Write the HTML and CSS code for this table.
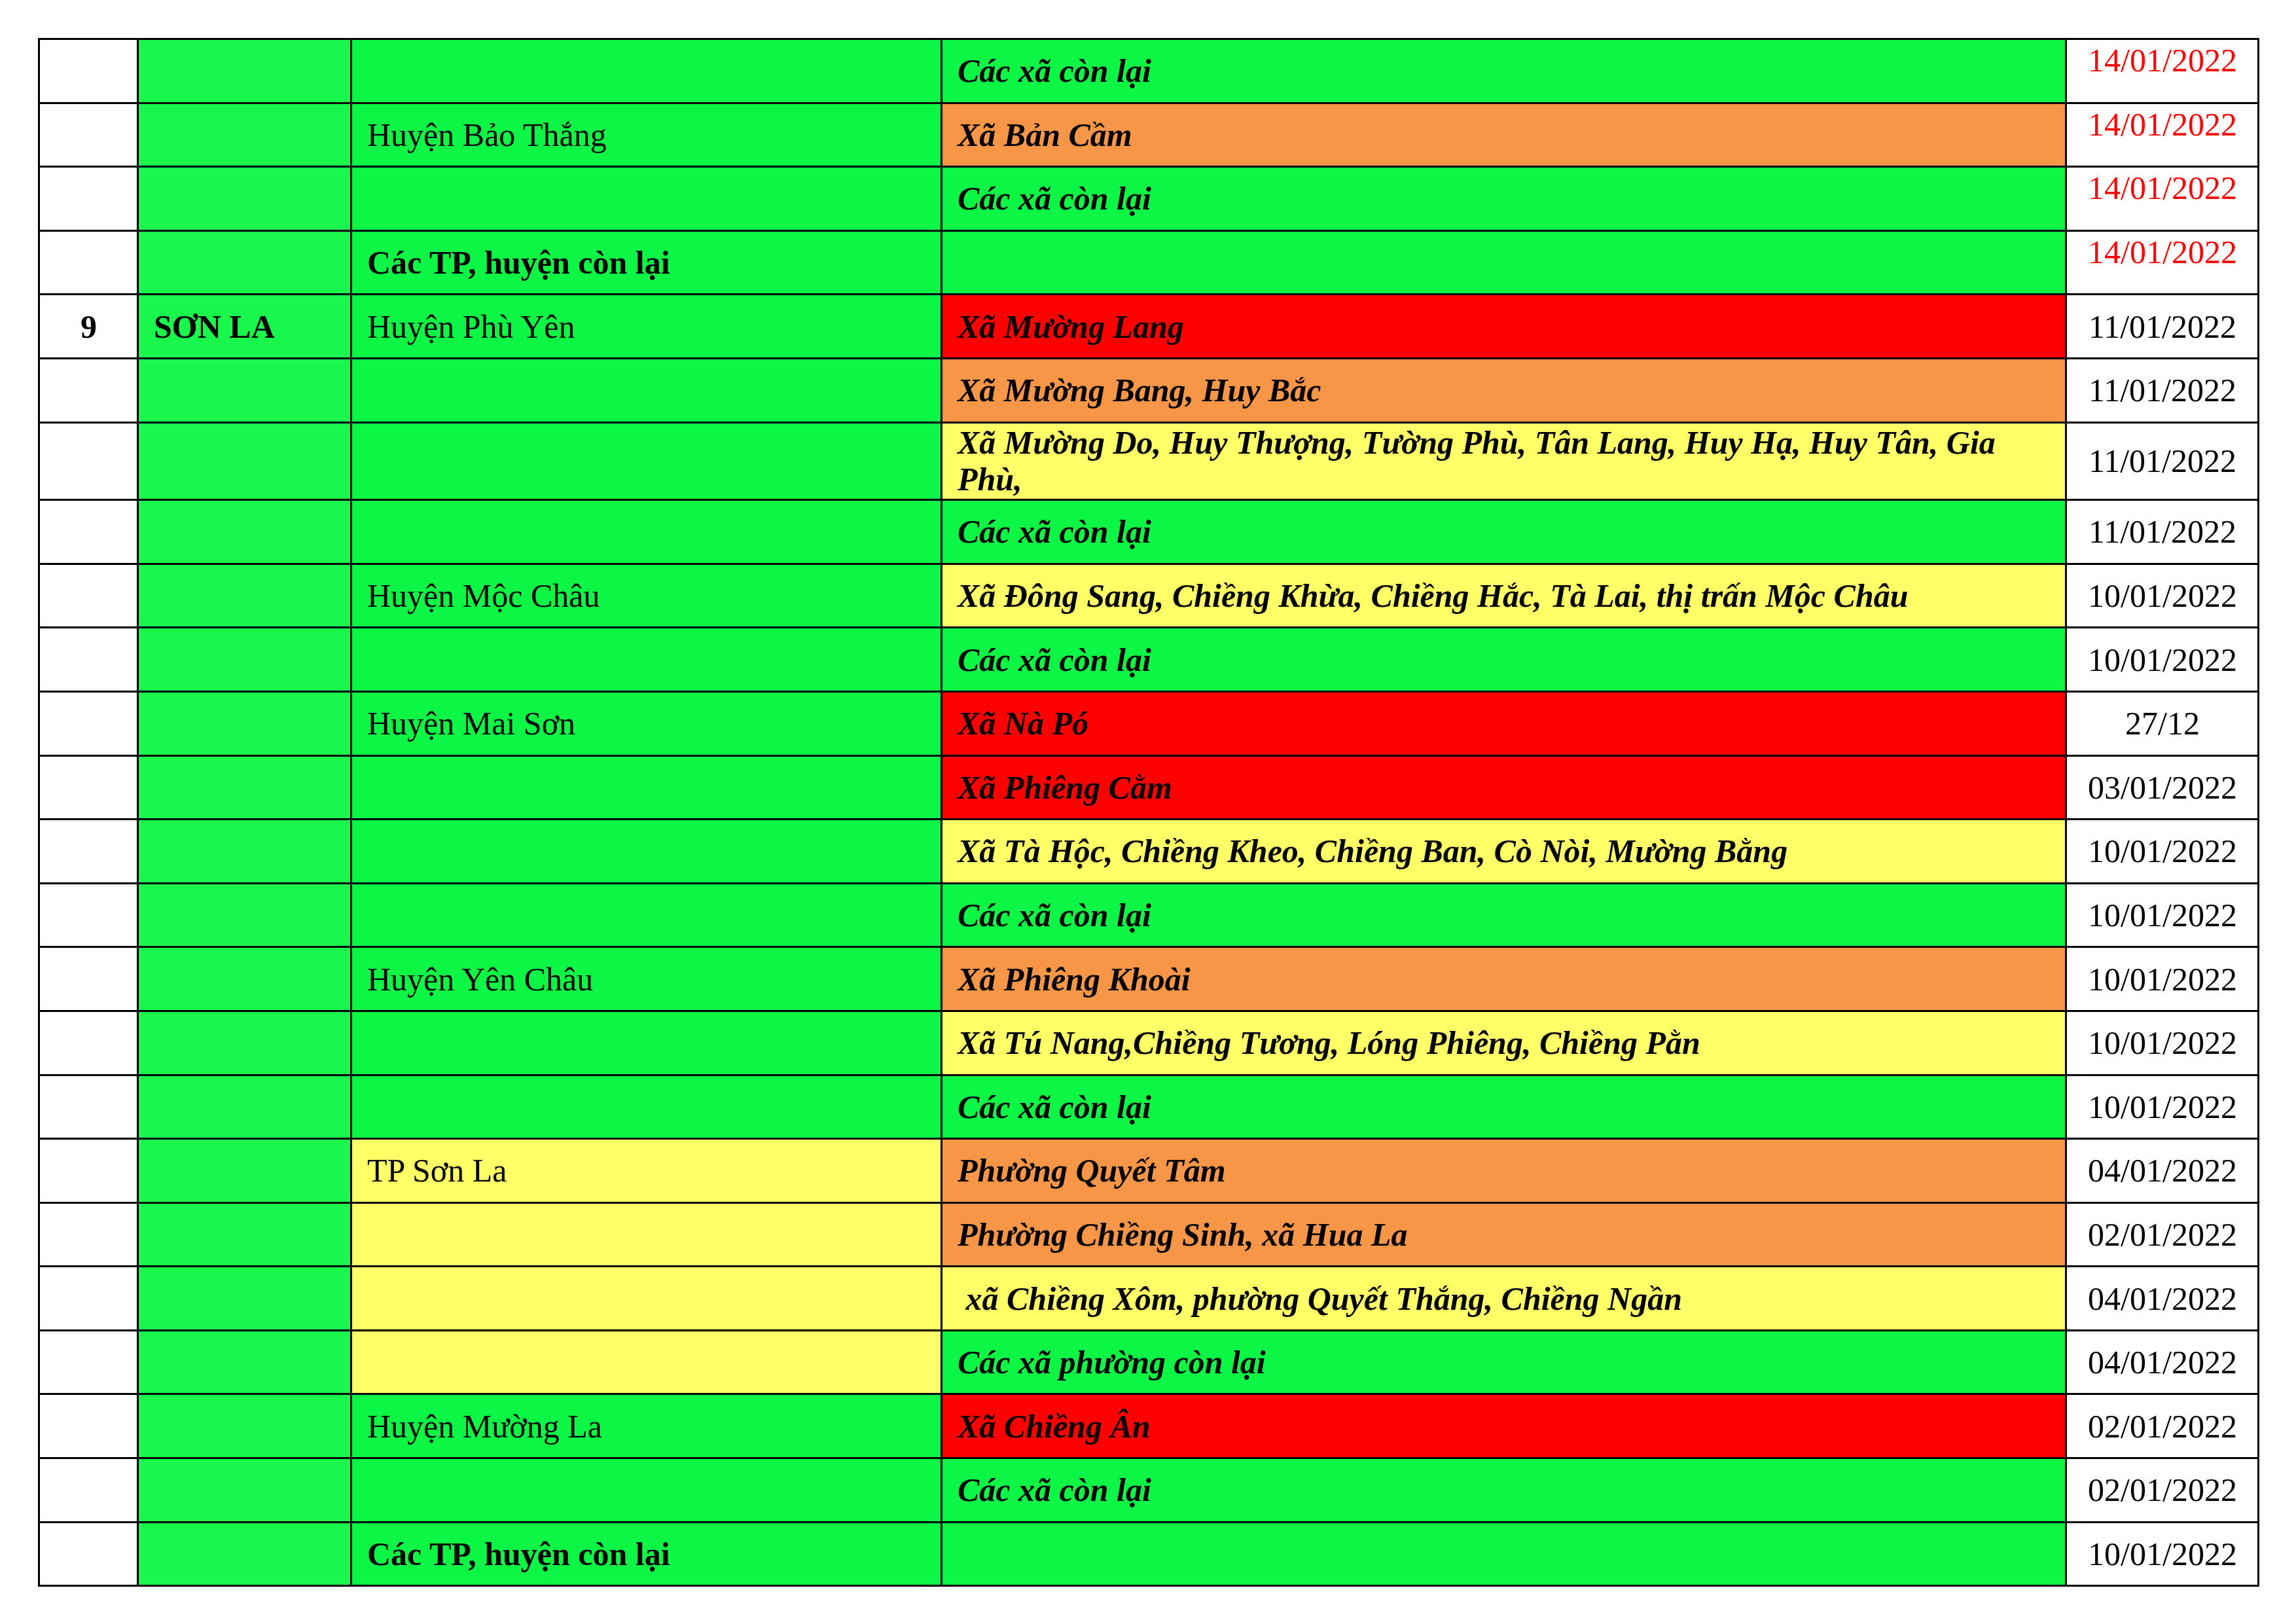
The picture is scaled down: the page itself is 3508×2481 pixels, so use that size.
FILE: index.html
```html
<!DOCTYPE html>
<html lang="vi">
<head>
<meta charset="utf-8">
<title>Cấp độ dịch</title>
<link rel="stylesheet" href="styles.css">
</head>
<body>
<table class="sheet">
  <colgroup>
    <col class="w-num"><col class="w-prov"><col class="w-dist"><col class="w-comm"><col class="w-date">
  </colgroup>
  <tbody>
    <tr><td class="num"></td><td class="prov"></td><td class="dist g"></td><td class="comm g">Các xã còn lại</td><td class="date late">14/01/2022</td></tr>
    <tr><td class="num"></td><td class="prov"></td><td class="dist g">Huyện Bảo Thắng</td><td class="comm o">Xã Bản Cầm</td><td class="date late">14/01/2022</td></tr>
    <tr><td class="num"></td><td class="prov"></td><td class="dist g"></td><td class="comm g">Các xã còn lại</td><td class="date late">14/01/2022</td></tr>
    <tr><td class="num"></td><td class="prov"></td><td class="dist g strong">Các TP, huyện còn lại</td><td class="comm g"></td><td class="date late">14/01/2022</td></tr>
    <tr><td class="num strong">9</td><td class="prov strong">SƠN LA</td><td class="dist g">Huyện Phù Yên</td><td class="comm r">Xã Mường Lang</td><td class="date">11/01/2022</td></tr>
    <tr><td class="num"></td><td class="prov"></td><td class="dist g"></td><td class="comm o">Xã Mường Bang, Huy Bắc</td><td class="date">11/01/2022</td></tr>
    <tr class="tall"><td class="num"></td><td class="prov"></td><td class="dist g"></td><td class="comm y">Xã Mường Do, Huy Thượng, Tường Phù, Tân Lang, Huy Hạ, Huy Tân, Gia Phù,</td><td class="date">11/01/2022</td></tr>
    <tr><td class="num"></td><td class="prov"></td><td class="dist g"></td><td class="comm g">Các xã còn lại</td><td class="date">11/01/2022</td></tr>
    <tr><td class="num"></td><td class="prov"></td><td class="dist g">Huyện Mộc Châu</td><td class="comm y">Xã Đông Sang, Chiềng Khừa, Chiềng Hắc, Tà Lai, thị trấn Mộc Châu</td><td class="date">10/01/2022</td></tr>
    <tr><td class="num"></td><td class="prov"></td><td class="dist g"></td><td class="comm g">Các xã còn lại</td><td class="date">10/01/2022</td></tr>
    <tr><td class="num"></td><td class="prov"></td><td class="dist g">Huyện Mai Sơn</td><td class="comm r">Xã Nà Pó</td><td class="date">27/12</td></tr>
    <tr><td class="num"></td><td class="prov"></td><td class="dist g"></td><td class="comm r">Xã Phiêng Cằm</td><td class="date">03/01/2022</td></tr>
    <tr><td class="num"></td><td class="prov"></td><td class="dist g"></td><td class="comm y">Xã Tà Hộc, Chiềng Kheo, Chiềng Ban, Cò Nòi, Mường Bằng</td><td class="date">10/01/2022</td></tr>
    <tr><td class="num"></td><td class="prov"></td><td class="dist g"></td><td class="comm g">Các xã còn lại</td><td class="date">10/01/2022</td></tr>
    <tr><td class="num"></td><td class="prov"></td><td class="dist g">Huyện Yên Châu</td><td class="comm o">Xã Phiêng Khoài</td><td class="date">10/01/2022</td></tr>
    <tr><td class="num"></td><td class="prov"></td><td class="dist g"></td><td class="comm y">Xã Tú Nang,Chiềng Tương, Lóng Phiêng, Chiềng Pằn</td><td class="date">10/01/2022</td></tr>
    <tr><td class="num"></td><td class="prov"></td><td class="dist g"></td><td class="comm g">Các xã còn lại</td><td class="date">10/01/2022</td></tr>
    <tr><td class="num"></td><td class="prov"></td><td class="dist y">TP Sơn La</td><td class="comm o">Phường Quyết Tâm</td><td class="date">04/01/2022</td></tr>
    <tr><td class="num"></td><td class="prov"></td><td class="dist y"></td><td class="comm o">Phường Chiềng Sinh, xã Hua La</td><td class="date">02/01/2022</td></tr>
    <tr><td class="num"></td><td class="prov"></td><td class="dist y"></td><td class="comm y">&nbsp;xã Chiềng Xôm, phường Quyết Thắng, Chiềng Ngần</td><td class="date">04/01/2022</td></tr>
    <tr><td class="num"></td><td class="prov"></td><td class="dist y"></td><td class="comm g">Các xã phường còn lại</td><td class="date">04/01/2022</td></tr>
    <tr><td class="num"></td><td class="prov"></td><td class="dist g">Huyện Mường La</td><td class="comm r">Xã Chiềng Ân</td><td class="date">02/01/2022</td></tr>
    <tr><td class="num"></td><td class="prov"></td><td class="dist g"></td><td class="comm g">Các xã còn lại</td><td class="date">02/01/2022</td></tr>
    <tr><td class="num"></td><td class="prov"></td><td class="dist g strong">Các TP, huyện còn lại</td><td class="comm g"></td><td class="date">10/01/2022</td></tr>
  </tbody>
</table>
</body>
</html>
```

FILE: styles.css
```css
html, body {
  margin: 0;
  padding: 0;
  background: #ffffff;
}

body {
  padding: 58px 0 0 58px;
  font-family: "Liberation Serif", "Times New Roman", serif;
  font-size: 50px;
  color: #000000;
}

.sheet {
  border-collapse: collapse;
  table-layout: fixed;
  width: 3391px;
}

.w-num { width: 151px; }
.w-prov { width: 326px; }
.w-dist { width: 902px; }
.w-comm { width: 1718px; }
.w-date { width: 294px; }

.sheet tr { height: 97.6px; }
.sheet tr.tall { height: 118.6px; }

.sheet td {
  border: 3px solid #000000;
  padding: 0 22px 0 23px;
  vertical-align: middle;
  line-height: 56px;
  overflow: hidden;
}

.num {
  background: #ffffff;
  text-align: center;
  padding: 0;
}

.prov {
  background: #1af74c;
}

.dist {
  padding-top: 3px;
}

.comm {
  font-weight: bold;
  font-style: italic;
  padding-top: 3px;
}

.date {
  background: #ffffff;
  text-align: center;
  padding: 3px 0 0 0;
}

.date.late {
  color: #ff0000;
  vertical-align: top;
  padding-top: 3px;
}

.strong { font-weight: bold; }

.g { background: #0cf646; }
.o { background: #f79646; }
.y { background: #ffff66; }
.r { background: #ff0000; }
```
